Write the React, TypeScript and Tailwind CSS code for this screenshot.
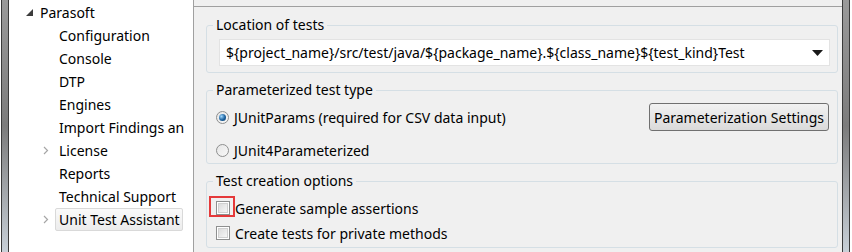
const FONT = "font-['Segoe_UI','Noto_Sans',Arial,sans-serif]";

type TreeItem = { label: string; chevron?: boolean; selected?: boolean };

const CHILDREN: TreeItem[] = [
  { label: "Configuration" },
  { label: "Console" },
  { label: "DTP" },
  { label: "Engines" },
  { label: "Import Findings an" },
  { label: "License", chevron: true },
  { label: "Reports" },
  { label: "Technical Support" },
  { label: "Unit Test Assistant", chevron: true, selected: true },
];

function Chevron() {
  return (
    <svg width="6" height="9" viewBox="0 0 6 9" className="shrink-0">
      <path d="M1 1 L4.5 4.5 L1 8" fill="none" stroke="#a6a6a6" strokeWidth="1.2" />
    </svg>
  );
}

function Tree() {
  return (
    <div className="flex flex-col pt-[1px] text-[14px] text-black">
      <div className="flex h-[23px] items-center">
        <div className="flex w-[31px] shrink-0 justify-end pr-[7px]">
          <svg width="7" height="7" viewBox="0 0 7 7">
            <path d="M7 0 L7 7 L0 7 Z" fill="#3c3c3c" />
          </svg>
        </div>
        <span className="whitespace-nowrap">Parasoft</span>
      </div>
      {CHILDREN.map((c) => (
        <div key={c.label} className="flex h-[23px] items-center">
          <div className="flex w-[46px] shrink-0 justify-end pr-[6px]">{c.chevron && <Chevron />}</div>
          <span
            className={
              c.selected
                ? "flex h-[23px] w-[128px] shrink-0 items-center whitespace-nowrap rounded-[2px] border border-[#d9d9d9] bg-gradient-to-b from-[#fafafa] to-[#ececec] pl-[3px]"
                : "whitespace-nowrap pl-[4px]"
            }
          >
            {c.label}
          </span>
        </div>
      ))}
    </div>
  );
}

function EdgeStrip({ side }: { side: "left" | "right" }) {
  return (
    <div
      className={
        side === "left"
          ? "flex h-full w-[9px] shrink-0 bg-white pl-[1px]"
          : "flex h-full w-[10px] shrink-0 bg-white pr-[2px]"
      }
    >
      <div className="h-full w-full border-x border-[#3a3a3a] bg-gradient-to-b from-[#9a9a9a] via-[#7c7c7c] to-[#c8d0d8]" />
    </div>
  );
}

function Group({ title, children, className }: { title: string; children: React.ReactNode; className?: string }) {
  return (
    <fieldset className={`rounded-[3px] border border-[#d5dfe5] p-0 ${className ?? ""}`}>
      <legend className="ml-[6px] px-[3px] text-[14px] leading-[18px] text-black">{title}</legend>
      {children}
    </fieldset>
  );
}

function Radio({ checked }: { checked?: boolean }) {
  return (
    <span className="flex h-[13px] w-[13px] shrink-0 items-center justify-center rounded-full border border-[#8e8f8f] bg-gradient-to-br from-[#e6e6e6] to-[#f8f8f8]">
      {checked && (
        <span className="h-[7px] w-[7px] rounded-full bg-[radial-gradient(circle_at_35%_35%,#9fd8ff,#1a5f9c_55%,#0c3d6b)]" />
      )}
    </span>
  );
}

function Checkbox() {
  return (
    <span className="flex h-[14px] w-[14px] shrink-0 items-center justify-center border border-[#8e8f8f] bg-white">
      <span className="h-[10px] w-[10px] border border-[#d0d0d0] bg-gradient-to-br from-[#dcdcdc] to-[#f6f6f6]" />
    </span>
  );
}

export default function App() {
  return (
    <div className={`flex h-[252px] w-[852px] overflow-hidden bg-[#f0f0f0] ${FONT}`}>
      <EdgeStrip side="left" />
      <div className="h-full w-[184px] shrink-0 overflow-hidden bg-white">
        <Tree />
      </div>
      <div className="h-full w-[1px] shrink-0 bg-[#a0a0a0]" />
      <div className="flex h-full flex-1 flex-col">
        <div className="h-[7px] shrink-0 border-b border-[#a0a0a0]" />
        <div className="flex flex-col gap-[8px] pl-[12px] pr-[4px] pt-[9px] text-[14px] text-black">
          <Group title="Location of tests" className="h-[57px]">
            <div className="mx-[12px] mt-[5px] mr-[7px] flex h-[27px] items-center justify-between border border-[#e3e3e3] bg-white pl-[6px] pr-[6px]">
              <span className="whitespace-nowrap">
                {"${project_name}/src/test/java/${package_name}.${class_name}${test_kind}Test"}
              </span>
              <svg width="11" height="6" viewBox="0 0 11 6">
                <path d="M0 0 L11 0 L5.5 6 Z" fill="#1a1a1a" />
              </svg>
            </div>
          </Group>
          <Group title="Parameterized test type" className="h-[83px]">
            <div className="pl-[9px] pr-[8px]">
              <div className="mt-[4px] flex items-center justify-between">
                <label className="flex items-center gap-[5px]">
                  <Radio checked />
                  <span>JUnitParams (required for CSV data input)</span>
                </label>
                <button className="flex h-[28px] w-[180px] items-center justify-center whitespace-nowrap rounded-[3px] border border-[#707070] bg-gradient-to-b from-[#f2f2f2] to-[#dadada] text-[14px] text-black">
                  Parameterization Settings
                </button>
              </div>
              <label className="mt-[9px] flex items-center gap-[5px]">
                <Radio />
                <span>JUnit4Parameterized</span>
              </label>
            </div>
          </Group>
          <Group title="Test creation options" className="h-[76px]">
            <div className="pl-[9px]">
              <label className="relative mt-[6px] flex h-[24px] items-center gap-[5px]">
                <Checkbox />
                <span>Generate sample assertions</span>
                <span className="absolute left-[-7px] top-[0px] h-[21px] w-[26px] border-2 border-[#e5393a]" />
              </label>
              <label className="mt-[1px] flex h-[24px] items-center gap-[5px]">
                <Checkbox />
                <span>Create tests for private methods</span>
              </label>
            </div>
          </Group>
        </div>
      </div>
      <EdgeStrip side="right" />
    </div>
  );
}
